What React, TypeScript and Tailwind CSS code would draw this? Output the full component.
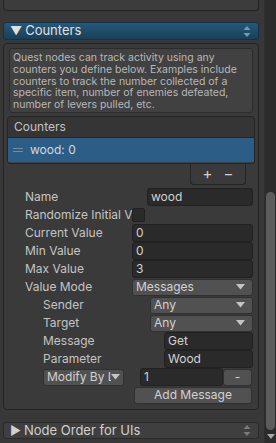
const font = "font-['Inter',sans-serif]";

function UpDown({ color }: { color: string }) {
  return (
    <svg width="8" height="11" viewBox="0 0 8 11" className="shrink-0">
      <path d="M4 0 L7.5 4 L0.5 4 Z" fill={color} />
      <path d="M4 11 L7.5 7 L0.5 7 Z" fill={color} />
    </svg>
  );
}

function Arrow() {
  return (
    <svg width="9" height="6" viewBox="0 0 9 6" className="shrink-0">
      <path d="M0 0 H9 L4.5 5.5 Z" fill="#c4c4c4" />
    </svg>
  );
}

function Field({ value, className = '' }: { value: string; className?: string }) {
  return (
    <div className={`h-[18px] rounded-[3px] border border-[#212121] bg-[#2a2a2a] pl-[3px] text-[12px] leading-[16px] text-[#d2d2d2] ${className}`}>
      {value}
    </div>
  );
}

function Dropdown({ value, className = '' }: { value: string; className?: string }) {
  return (
    <div className={`flex h-[17px] items-center justify-between rounded-[3px] border border-[#303030] bg-[#515151] pl-[3px] pr-[7px] text-[12px] text-[#d2d2d2] ${className}`}>
      <span className="truncate">{value}</span>
      <Arrow />
    </div>
  );
}

function Row({ label, labelW, children, indent = false }: { label: string; labelW: number; children: React.ReactNode; indent?: boolean }) {
  return (
    <div className={`flex h-[18px] items-center ${indent ? 'pl-[39px]' : 'pl-[21px]'} pr-[5px]`}>
      <div style={{ width: labelW }} className="shrink-0 overflow-hidden whitespace-nowrap text-[12px] text-[#c4c4c4]">
        {label}
      </div>
      <div className="flex-1">{children}</div>
    </div>
  );
}

export default function App() {
  return (
    <div className={`flex h-[443px] w-[276px] overflow-hidden bg-[#383838] ${font}`}>
      <div className="w-[264px] shrink-0 pl-[3px] pr-[5px]">
        {/* previous panel, cut off at the top */}
        <div className="h-[11px] rounded-b-[4px] border border-t-0 border-[#242424] bg-[#3c3c3c]" />

        {/* Counters foldout header */}
        <div className="mt-[11px] flex h-[18px] items-center rounded-[3px] border border-[#10324a] bg-linear-to-b from-[#25587a] to-[#1a4058] pl-[6px] pr-[7px] text-[13px] text-[#e0e0e0]">
          <span className="mr-[3px] text-[12px] leading-none">▼</span>
          <span className="flex-1">Counters</span>
          <UpDown color="#6b9bb8" />
        </div>

        {/* Counters box */}
        <div className="mt-[3px] rounded-[4px] border border-[#242424] bg-[#3a3a3a] pb-[5px]">
          <div className="mx-[5px] mt-[4px] h-[65px] rounded-[3px] border border-[#2b2b2b] bg-[#414141] px-[3px] pt-[3px] text-[10.5px] leading-[11.75px] text-[#b8b8b8]">
            Quest nodes can track activity using any counters you define below. Examples include counters to track the number collected of a specific item, number of enemies defeated, number of levers pulled, etc.
          </div>

          {/* reorderable list */}
          <div className="ml-[3px] mr-[3px] mt-[3px]">
            <div className="flex h-[22px] items-center rounded-t-[4px] border border-[#242424] bg-[#353535] pl-[6px] text-[12px] text-[#c4c4c4]">
              Counters
            </div>
            <div className="rounded-b-[4px] border border-t-0 border-[#242424] bg-[#414141] pb-[1px]">
              <div className="flex h-[24px] items-center bg-[#2c5d87] pl-[5px] text-[12px] text-[#d8d8d8]">
                <div className="mr-[7px] flex w-[10px] flex-col gap-[2px]">
                  <div className="h-[1px] bg-[#7d8a95]" />
                  <div className="h-[1px] bg-[#7d8a95]" />
                </div>
                wood: 0
              </div>
            </div>
            <div className="flex justify-end pr-[9px]">
              <div className="flex h-[21px] w-[56px] items-center justify-around rounded-b-[4px] border border-t-0 border-[#242424] bg-[#3a3a3a] px-[6px] text-[15px] text-[#d0d0d0]">
                <span>+</span>
                <span>−</span>
              </div>
            </div>
          </div>

          <div className="mt-[3px] flex flex-col">
            <Row label="Name" labelW={122}>
              <Field value="wood" />
            </Row>
            <Row label="Randomize Initial Value" labelW={107}>
              <div className="h-[14px] w-[13px] rounded-[2px] border border-[#212121] bg-[#2a2a2a]" />
            </Row>
            <Row label="Current Value" labelW={107}>
              <Field value="0" />
            </Row>
            <Row label="Min Value" labelW={107}>
              <Field value="0" />
            </Row>
            <Row label="Max Value" labelW={107}>
              <Field value="3" />
            </Row>
            <Row label="Value Mode" labelW={107}>
              <Dropdown value="Messages" />
            </Row>
            <Row label="Sender" labelW={107} indent>
              <Dropdown value="Any" />
            </Row>
            <Row label="Target" labelW={107} indent>
              <Dropdown value="Any" />
            </Row>
            <Row label="Message" labelW={121} indent>
              <Field value="Get" />
            </Row>
            <Row label="Parameter" labelW={121} indent>
              <Field value="Wood" />
            </Row>
            <div className="flex h-[18px] items-center pl-[39px] pr-[6px]">
              <div className="flex h-[17px] w-[81px] items-center rounded-[3px] border border-[#303030] bg-[#515151] pl-[3px] pr-[3px] text-[12px] text-[#d2d2d2]">
                <span className="w-[68px] overflow-hidden whitespace-nowrap">Modify By Literal</span>
                <Arrow />
              </div>
              <Field value="1" className="ml-[16px] w-[83px]" />
              <div className="flex h-[17px] flex-1 items-center justify-center rounded-[3px] border border-[#303030] bg-[#515151] text-[12px] text-[#d2d2d2]">
                -
              </div>
            </div>
            <div className="flex h-[18px] items-center pl-[130px] pr-[6px]">
              <div className="flex h-[17px] flex-1 items-center justify-center rounded-[3px] border border-[#303030] bg-[#515151] text-[12px] text-[#d2d2d2]">
                Add Message
              </div>
            </div>
          </div>
        </div>

        {/* Node Order foldout */}
        <div className="mt-[12px] flex h-[17px] items-center rounded-[3px] border border-[#2a2a2a] bg-[#3f3f3f] pl-[6px] pr-[7px] text-[13px] text-[#d0d0d0]">
          <span className="mr-[3px] text-[12px] leading-none">▶</span>
          <span className="flex-1">Node Order for UIs</span>
          <UpDown color="#7a7a7a" />
        </div>
      </div>

      {/* scrollbar */}
      <div className="flex w-[12px] flex-col border-l border-[#2e2e2e] bg-[#2b2b2b]">
        <div className="h-[192px]" />
        <div className="mx-[1px] h-[238px] rounded-full bg-[#5c5c5c]" />
        <div className="flex flex-1 items-center justify-center">
          <svg width="8" height="5" viewBox="0 0 8 5">
            <path d="M0 0 H8 L4 5 Z" fill="#a8a8a8" />
          </svg>
        </div>
      </div>
    </div>
  );
}
